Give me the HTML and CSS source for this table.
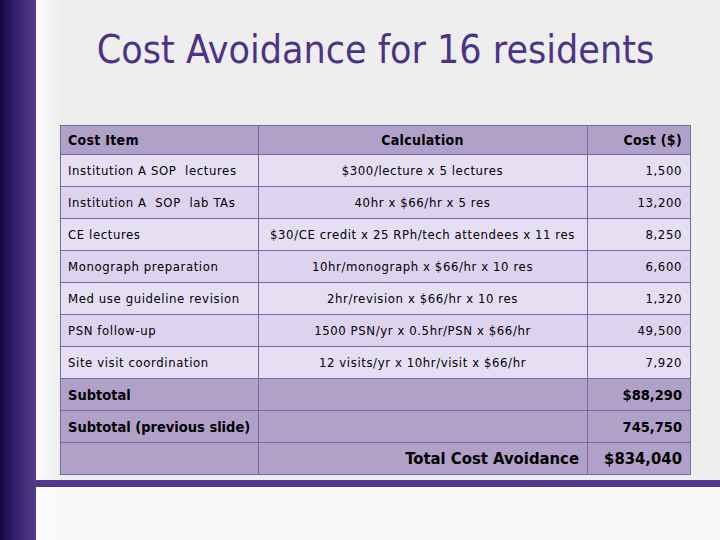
FILE: index.html
```html
<!DOCTYPE html>
<html>
<head>
<meta charset="utf-8">
<link rel="stylesheet" href="styles.css">
</head>
<body>
<div class="slide">
  <div class="sidebar"></div>
  <div class="content">
    <div class="top">
      <h1 class="title">Cost Avoidance for 16 residents</h1>
      <table class="costs">
        <colgroup><col class="c1"><col class="c2"><col class="c3"></colgroup>
        <thead>
          <tr class="head">
            <th class="l">Cost Item</th>
            <th class="c">Calculation</th>
            <th class="r">Cost ($)</th>
          </tr>
        </thead>
        <tbody>
          <tr class="odd"><td class="l">Institution A SOP&nbsp; lectures</td><td class="c">$300/lecture x 5 lectures</td><td class="r">1,500</td></tr>
          <tr class="even"><td class="l">Institution A&nbsp; SOP&nbsp; lab TAs</td><td class="c">40hr x $66/hr x 5 res</td><td class="r">13,200</td></tr>
          <tr class="odd"><td class="l">CE lectures</td><td class="c">$30/CE credit x 25 RPh/tech attendees x 11 res</td><td class="r">8,250</td></tr>
          <tr class="even"><td class="l">Monograph preparation</td><td class="c">10hr/monograph x $66/hr x 10 res</td><td class="r">6,600</td></tr>
          <tr class="odd"><td class="l">Med use guideline revision</td><td class="c">2hr/revision x $66/hr x 10 res</td><td class="r">1,320</td></tr>
          <tr class="even"><td class="l">PSN follow-up</td><td class="c">1500 PSN/yr x 0.5hr/PSN x $66/hr</td><td class="r">49,500</td></tr>
          <tr class="odd"><td class="l">Site visit coordination</td><td class="c">12 visits/yr x 10hr/visit x $66/hr</td><td class="r">7,920</td></tr>
          <tr class="sum"><td class="l">Subtotal</td><td></td><td class="r">$88,290</td></tr>
          <tr class="sum"><td class="l">Subtotal (previous slide)</td><td></td><td class="r">745,750</td></tr>
          <tr class="sum total"><td></td><td class="r">Total Cost Avoidance</td><td class="r">$834,040</td></tr>
        </tbody>
      </table>
    </div>
    <div class="rule"></div>
    <div class="bottom"></div>
  </div>
</div>
</body>
</html>
```
FILE: styles.css
```css
html, body {
  margin: 0;
  padding: 0;
}
body {
  width: 720px;
  height: 540px;
  overflow: hidden;
  font-family: "DejaVu Sans Condensed", "DejaVu Sans", sans-serif;
  font-stretch: condensed;
}
.slide {
  display: flex;
  height: 540px;
}
.sidebar {
  width: 36px;
  flex: none;
  background: linear-gradient(to right, #14063f 0%, #33206a 40%, #553a8e 100%);
}
.content {
  flex: 1;
  display: flex;
  flex-direction: column;
}
.top {
  height: 480px;
  box-sizing: border-box;
  padding: 27px 30px 0 24px;
  background: linear-gradient(to right, #fcfcfc 0px, #f0f0f0 22px, #eeeeee 24px, #eeeeee 100%);
}
.title {
  margin: 0;
  height: 46px;
  line-height: 46px;
  font-size: 39px;
  font-weight: normal;
  text-align: center;
  color: #4c3388;
}
.costs {
  margin-top: 52px;
  width: 630px;
  table-layout: fixed;
  border-collapse: collapse;
  font-size: 13px;
  letter-spacing: 0.6px;
  color: #000000;
}
.c1 { width: 198px; }
.c2 { width: 329px; }
.c3 { width: 103px; }
.costs th, .costs td {
  border: 1px solid #7b67a1;
  padding: 0 8px 0 7px;
  height: 32px;
  box-sizing: border-box;
  vertical-align: middle;
  white-space: nowrap;
}
.costs .head th {
  height: 29px;
  background: #b1a1c9;
  font-size: 14px;
  letter-spacing: 0.3px;
  font-weight: bold;
}
.l { text-align: left; }
.c { text-align: center; }
.r { text-align: right; }
.odd td { background: #e6dff3; }
.even td { background: #ddd3ee; }
.sum td {
  background: #b1a1c9;
  font-weight: bold;
  font-size: 14.5px;
  letter-spacing: 0;
}
.total td {
  font-size: 16.5px;
}
.rule {
  height: 7px;
  background: #52378b;
}
.bottom {
  flex: 1;
  background: linear-gradient(to right, #fdfdfd 0px, #f8f8f8 22px, #f7f7f7 24px, #f7f7f7 100%);
}
```
